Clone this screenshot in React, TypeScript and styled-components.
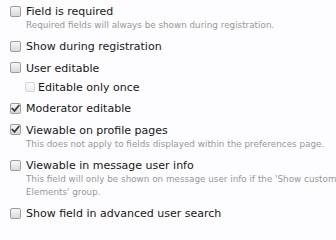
import React from "react";
import styled, { createGlobalStyle } from "styled-components";

const Global = createGlobalStyle`
  html, body {
    margin: 0;
    padding: 0;
    background: #fdfdff;
    overflow: hidden;
  }
  body {
    font-family: "DejaVu Sans", Verdana, Tahoma, sans-serif;
  }
`;

const List = styled.ul`
  list-style: none;
  margin: 0;
  padding: 4px 0 0 10px;
  width: 700px;
  display: flex;
  flex-direction: column;
`;

const Item = styled.li<{ $sub?: boolean; $gap?: number }>`
  display: flex;
  flex-direction: column;
  margin-left: ${(p) => (p.$sub ? 15 : 0)}px;
  margin-bottom: ${(p) => (p.$gap ?? 6.5)}px;
`;

const Row = styled.label`
  display: flex;
  align-items: flex-start;
  gap: 5px;
`;

const Box = styled.span<{ $disabled?: boolean; $small?: boolean }>`
  box-sizing: border-box;
  flex: none;
  width: ${(p) => (p.$small ? 10 : 11)}px;
  height: ${(p) => (p.$small ? 10 : 11)}px;
  margin-top: ${(p) => (p.$small ? 2 : 1.5)}px;
  margin-right: ${(p) => (p.$small ? -2 : 0)}px;
  border: 1px solid ${(p) => (p.$disabled ? "#d4d4d8" : "#9c9ca2")};
  border-radius: 2px;
  background: ${(p) =>
    p.$disabled
      ? "linear-gradient(#fbfbfb, #ededed)"
      : "linear-gradient(#f6f6f6, #d9d9dc)"};
  display: flex;
  align-items: center;
  justify-content: center;
`;

const Label = styled.span`
  font-size: 11px;
  line-height: 15px;
  color: #161616;
  white-space: nowrap;
`;

const Desc = styled.div`
  font-size: 8.8px;
  line-height: 12.8px;
  color: #979797;
  padding-left: 16px;
  white-space: nowrap;
`;

const Check = () => (
  <svg width="9" height="9" viewBox="0 0 9 9">
    <path
      d="M1.3 4.6 L3.5 6.9 L7.8 1.6"
      fill="none"
      stroke="#3a3a3a"
      strokeWidth="1.7"
      strokeLinecap="square"
    />
  </svg>
);

type Opt = {
  label: string;
  checked?: boolean;
  sub?: boolean;
  desc?: React.ReactNode;
  gap?: number;
};

const options: Opt[] = [
  {
    label: "Field is required",
    desc: "Required fields will always be shown during registration.",
    gap: 7.5,
  },
  { label: "Show during registration" },
  { label: "User editable", gap: 4 },
  { label: "Editable only once", sub: true },
  { label: "Moderator editable", checked: true },
  {
    label: "Viewable on profile pages",
    checked: true,
    desc: "This does not apply to fields displayed within the preferences page.",
    gap: 7.5,
  },
  {
    label: "Viewable in message user info",
    desc: (
      <>
        This field will only be shown on message user info if the 'Show custom fields' option is enabled in the 'Message
        <br />
        Elements' group.
      </>
    ),
    gap: 7.5,
  },
  { label: "Show field in advanced user search" },
];

export default function App() {
  return (
    <>
      <Global />
      <List>
        {options.map((o) => (
          <Item key={o.label} $sub={o.sub} $gap={o.gap}>
            <Row>
              <Box $disabled={o.sub} $small={o.sub}>
                {o.checked && <Check />}
              </Box>
              <Label>{o.label}</Label>
            </Row>
            {o.desc && <Desc>{o.desc}</Desc>}
          </Item>
        ))}
      </List>
    </>
  );
}
